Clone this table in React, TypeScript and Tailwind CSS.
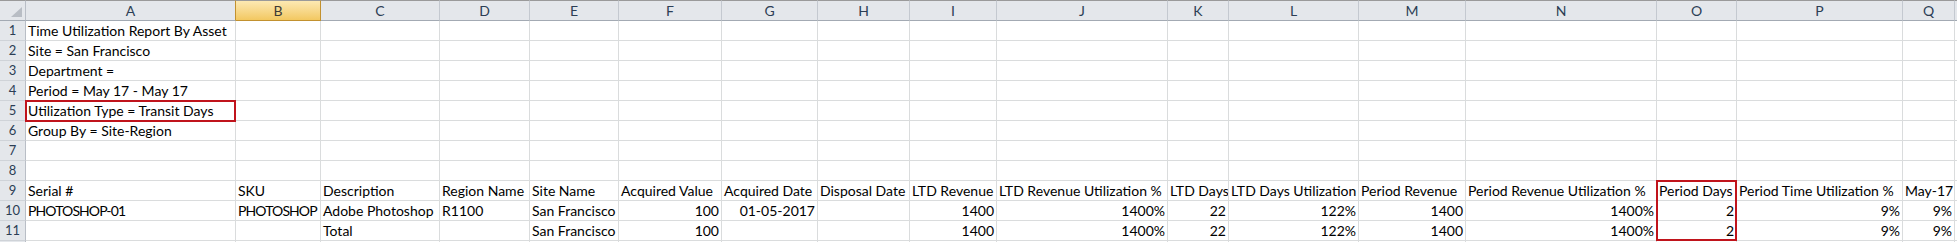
const cols = [
  { l: 'A', w: 210 },
  { l: 'B', w: 85 },
  { l: 'C', w: 119 },
  { l: 'D', w: 90 },
  { l: 'E', w: 89 },
  { l: 'F', w: 103 },
  { l: 'G', w: 96 },
  { l: 'H', w: 92 },
  { l: 'I', w: 87 },
  { l: 'J', w: 171 },
  { l: 'K', w: 61 },
  { l: 'L', w: 130 },
  { l: 'M', w: 107 },
  { l: 'N', w: 191 },
  { l: 'O', w: 80 },
  { l: 'P', w: 166 },
  { l: 'Q', w: 52 },
]

type Cell = string | { v: string; r: true }
const R = (v: string): Cell => ({ v, r: true })

const rows: Cell[][] = [
  ['Time Utilization Report By Asset'],
  ['Site = San Francisco'],
  ['Department ='],
  ['Period = May 17 - May 17'],
  ['Utilization Type = Transit Days'],
  ['Group By = Site-Region'],
  [],
  [],
  [
    'Serial #', 'SKU', 'Description', 'Region Name', 'Site Name', 'Acquired Value', 'Acquired Date',
    'Disposal Date', 'LTD Revenue', 'LTD Revenue Utilization %', 'LTD Days', 'LTD Days Utilization',
    'Period Revenue', 'Period Revenue Utilization %', 'Period Days', 'Period Time Utilization %', 'May-17',
  ],
  [
    'PHOTOSHOP-01', 'PHOTOSHOP', 'Adobe Photoshop', 'R1100', 'San Francisco', R('100'), R('01-05-2017'),
    '', R('1400'), R('1400%'), R('22'), R('122%'), R('1400'), R('1400%'), R('2'), R('9%'), R('9%'),
  ],
  [
    '', '', 'Total', '', 'San Francisco', R('100'), '', '', R('1400'), R('1400%'), R('22'), R('122%'),
    R('1400'), R('1400%'), R('2'), R('9%'), R('9%'),
  ],
  [],
]

export default function App() {
  return (
    <div
      className="relative w-[1957px] h-[242px] overflow-hidden bg-white text-black"
      style={{ fontFamily: 'Lato, "Open Sans", sans-serif' }}
    >
      <div className="grid grid-cols-[26px_210px_85px_119px_90px_89px_103px_96px_92px_87px_171px_61px_130px_107px_191px_80px_166px_52px_1fr] text-[14px] leading-[19px]">
        {/* column headers */}
        <div className="h-[21px] border-t border-t-[#9a9a9a] border-b border-b-[#a3aab3] border-r border-r-[#b9bec6] bg-[#e4e7eb] flex items-end justify-end p-[2px]">
          <svg width="11" height="10" viewBox="0 0 11 10" className="mr-[1px] mb-[1px]">
            <polygon points="11,0 11,10 0,10" fill="#b8bdc4" />
          </svg>
        </div>
        {cols.map((c) => (
          <div
            key={c.l}
            className={
              c.l === 'B'
                ? 'h-[21px] border-t border-t-[#9a9a9a] border-b border-b-[#c2912f] border-r border-r-[#c2912f] bg-gradient-to-b from-[#fce9b2] to-[#f3c860] flex items-center justify-center text-[#3d3a35]'
                : c.l === 'A'
                  ? 'h-[21px] border-t border-t-[#9a9a9a] border-b border-b-[#a3aab3] border-r border-r-[#c2912f] bg-[#e4e7eb] flex items-center justify-center text-[#2c3e55]'
                  : 'h-[21px] border-t border-t-[#9a9a9a] border-b border-b-[#a3aab3] border-r border-r-[#c4c9d0] bg-[#e4e7eb] flex items-center justify-center text-[#2c3e55]'
            }
          >
            {c.l}
          </div>
        ))}
        <div className="h-[21px] border-t border-t-[#9a9a9a] border-b border-b-[#a3aab3] bg-[#e4e7eb]" />

        {rows.map((row, ri) => (
          <Row key={ri} n={ri + 1} cells={row} />
        ))}
      </div>

      {/* highlight boxes */}
      <div className="absolute left-[25px] top-[100px] w-[211px] h-[22px] border-2 border-[#c0141c]" />
      <div className="absolute left-[1656px] top-[180px] w-[81px] h-[61px] border-2 border-[#c0141c]" />
    </div>
  )
}

function Row({ n, cells }: { n: number; cells: Cell[] }) {
  return (
    <>
      <div className="h-[20px] border-b border-b-[#cfd3d8] border-r border-r-[#b9bec6] bg-[#e4e7eb] flex items-end justify-center text-[13px] text-[#2c3e55]">
        {n}
      </div>
      {cols.map((c, i) => {
        const cell = cells[i] ?? ''
        const right = typeof cell !== 'string'
        const text = typeof cell === 'string' ? cell : cell.v
        // Lato caps run wider than the sheet's font
        const caps = text.startsWith('PHOTOSHOP')
        return (
          <div
            key={c.l}
            className={`h-[20px] border-b border-r border-[#dadcdd] flex items-end whitespace-nowrap overflow-hidden ${right ? 'justify-end pr-[2px]' : 'pl-[2px]'} ${caps ? 'tracking-[-0.9px]' : ''}`}
          >
            {text}
          </div>
        )
      })}
      <div className="h-[20px] border-b border-[#dadcdd]" />
    </>
  )
}
